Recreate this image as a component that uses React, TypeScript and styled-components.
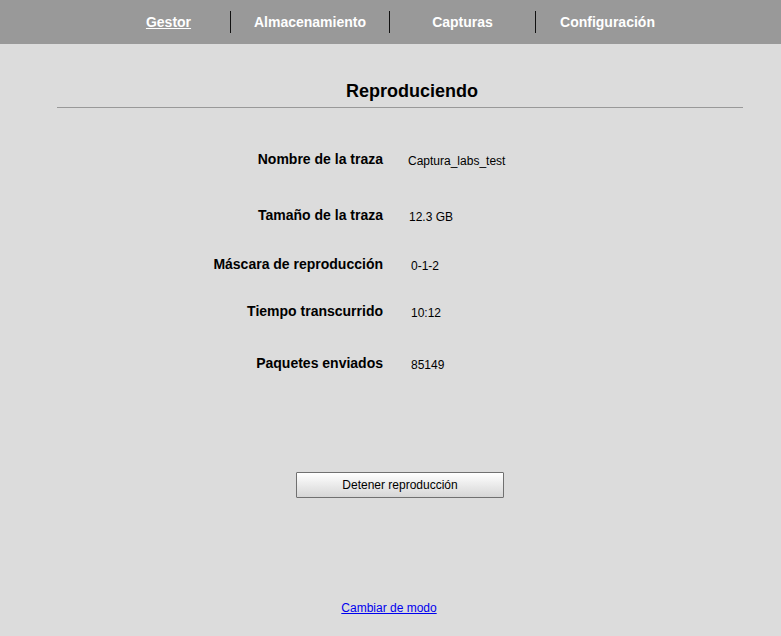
import React from 'react';
import styled, {createGlobalStyle} from 'styled-components';

const GlobalStyle = createGlobalStyle`
  html, body { margin: 0; padding: 0; background: #dcdcdc; }
  body { font-family: "Liberation Sans", Arial, sans-serif; color: #000; }
`;

const tabs = [
  {label: 'Gestor', width: 123, active: true},
  {label: 'Almacenamiento', width: 159},
  {label: 'Capturas', width: 146},
  {label: 'Configuración', width: 144},
];

const rows = [
  {label: 'Nombre de la traza', value: 'Captura_labs_test', gap: 0, shift: 25},
  {label: 'Tamaño de la traza', value: '12.3 GB', gap: 36, shift: 26},
  {label: 'Máscara de reproducción', value: '0-1-2', gap: 29, shift: 28},
  {label: 'Tiempo transcurrido', value: '10:12', gap: 27, shift: 28},
  {label: 'Paquetes enviados', value: '85149', gap: 32, shift: 28},
];

const App = () => {
  return (
    <Page>
      <GlobalStyle />
      <NavBar>
        {tabs.map((t, i) => (
          <NavItem key={t.label} $width={t.width} $divider={i > 0}>
            <NavLink href="#" $active={!!t.active}>{t.label}</NavLink>
          </NavItem>
        ))}
      </NavBar>
      <Main>
        <Title>Reproduciendo</Title>
        <InfoList>
          {rows.map(r => (
            <InfoRow key={r.label} $gap={r.gap}>
              <Label>{r.label}</Label>
              <Value $shift={r.shift}>{r.value}</Value>
            </InfoRow>
          ))}
        </InfoList>
        <ButtonRow>
          <StopButton type="button">Detener reproducción</StopButton>
        </ButtonRow>
        <Footer>
          <ModeLink href="#">Cambiar de modo</ModeLink>
        </Footer>
      </Main>
    </Page>
  );
};

const Page = styled.div`
  width: 781px; height: 636px; overflow: hidden;
`;

const NavBar = styled.nav`
  display: flex; justify-content: flex-start; align-items: center;
  height: 44px; padding-left: 107px; box-sizing: border-box;
  background: #999999;
`;

const NavItem = styled.div<{$width: number; $divider: boolean}>`
  display: flex; align-items: center; justify-content: center;
  width: ${p => p.$width}px; height: 22px; box-sizing: border-box;
  border-left: ${p => (p.$divider ? '1px solid #111' : 'none')};
`;

const NavLink = styled.a<{$active: boolean}>`
  color: #fff; font-size: 14px; font-weight: bold;
  text-decoration: ${p => (p.$active ? 'underline' : 'none')};
`;

const Main = styled.main`
  display: flex; flex-direction: column;
`;

const Title = styled.h2`
  margin: 37px 38px 0 57px; padding: 0 0 5px 24px;
  border-bottom: 1px solid #999;
  font-size: 18px; line-height: 21px; font-weight: bold; text-align: center;
`;

const InfoList = styled.div`
  display: flex; flex-direction: column; margin-top: 43px;
`;

const InfoRow = styled.div<{$gap: number}>`
  display: grid; grid-template-columns: 383px 1fr; align-items: start;
  height: 20px; margin-top: ${p => p.$gap}px;
`;

const Label = styled.div`
  text-align: right; font-size: 14px; line-height: 16px; font-weight: bold;
`;

const Value = styled.div<{$shift: number}>`
  padding: 3px 0 0 ${p => p.$shift}px; font-size: 12px; line-height: 14px;
`;

const ButtonRow = styled.div`
  display: flex; justify-content: center; margin-top: 97px; padding-left: 19px;
`;

const StopButton = styled.button`
  width: 208px; height: 26px; padding: 0;
  font-family: "Liberation Sans", Arial, sans-serif; font-size: 12px; color: #000;
  background: linear-gradient(#ffffff, #d6d6d6);
  border: 1px solid #707070; border-radius: 1px;
`;

const Footer = styled.div`
  display: flex; justify-content: center; margin-top: 103px; padding-right: 3px;
`;

const ModeLink = styled.a`
  font-size: 12px; color: #0000ee; text-decoration: underline;
`;

export default App;
